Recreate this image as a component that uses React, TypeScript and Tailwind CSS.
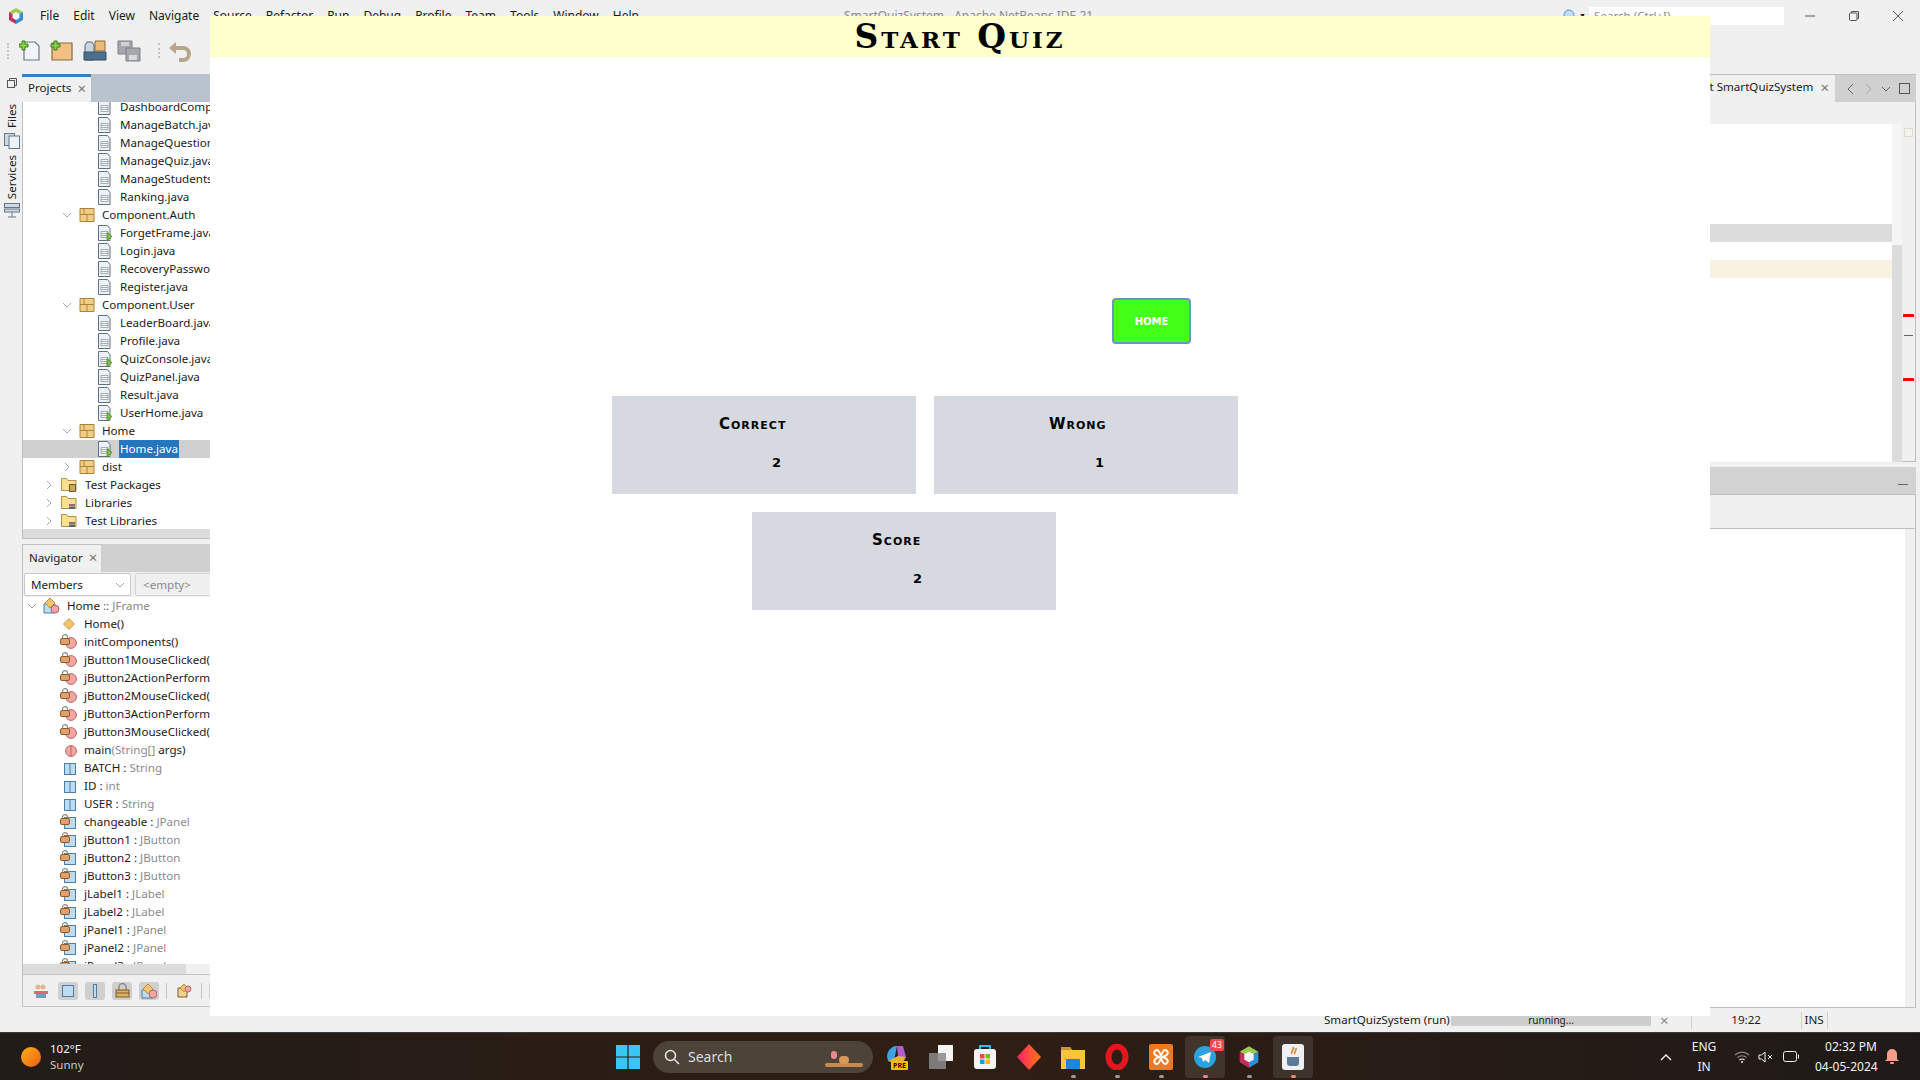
import type { ReactNode } from "react"

// ── Data ───────────────────────────────────────────────────────────────────────

type ProjectRow = { label: string; kind: "file" | "run" | "pkg" | "pkgClosed" | "folder" | "lib"; selected?: boolean }

const PROJECT_ROWS: ProjectRow[] = [
  { label: "DashboardComponent.java", kind: "file" },
  { label: "ManageBatch.java", kind: "file" },
  { label: "ManageQuestion.java", kind: "file" },
  { label: "ManageQuiz.java", kind: "file" },
  { label: "ManageStudents.java", kind: "file" },
  { label: "Ranking.java", kind: "file" },
  { label: "Component.Auth", kind: "pkg" },
  { label: "ForgetFrame.java", kind: "run" },
  { label: "Login.java", kind: "file" },
  { label: "RecoveryPassword.java", kind: "file" },
  { label: "Register.java", kind: "file" },
  { label: "Component.User", kind: "pkg" },
  { label: "LeaderBoard.java", kind: "file" },
  { label: "Profile.java", kind: "file" },
  { label: "QuizConsole.java", kind: "run" },
  { label: "QuizPanel.java", kind: "file" },
  { label: "Result.java", kind: "file" },
  { label: "UserHome.java", kind: "run" },
  { label: "Home", kind: "pkg" },
  { label: "Home.java", kind: "run", selected: true },
  { label: "dist", kind: "pkgClosed" },
  { label: "Test Packages", kind: "folder" },
  { label: "Libraries", kind: "lib" },
  { label: "Test Libraries", kind: "lib" },
]

type MemberRow = { name: string; type?: string; icon: "ctor" | "method" | "static" | "sfield" | "field" }

const MEMBER_ROWS: MemberRow[] = [
  { name: "Home()", icon: "ctor" },
  { name: "initComponents()", icon: "method" },
  { name: "jButton1MouseClicked(MouseEvent evt)", icon: "method" },
  { name: "jButton2ActionPerformed(ActionEvent evt)", icon: "method" },
  { name: "jButton2MouseClicked(MouseEvent evt)", icon: "method" },
  { name: "jButton3ActionPerformed(ActionEvent evt)", icon: "method" },
  { name: "jButton3MouseClicked(MouseEvent evt)", icon: "method" },
  { name: "main", type: "args", icon: "static" },
  { name: "BATCH", type: "String", icon: "sfield" },
  { name: "ID", type: "int", icon: "sfield" },
  { name: "USER", type: "String", icon: "sfield" },
  { name: "changeable", type: "JPanel", icon: "field" },
  { name: "jButton1", type: "JButton", icon: "field" },
  { name: "jButton2", type: "JButton", icon: "field" },
  { name: "jButton3", type: "JButton", icon: "field" },
  { name: "jLabel1", type: "JLabel", icon: "field" },
  { name: "jLabel2", type: "JLabel", icon: "field" },
  { name: "jPanel1", type: "JPanel", icon: "field" },
  { name: "jPanel2", type: "JPanel", icon: "field" },
  { name: "jPanel3", type: "JPanel", icon: "field" },
]

const MENU = ["File", "Edit", "View", "Navigate", "Source", "Refactor", "Run", "Debug", "Profile", "Team", "Tools", "Window", "Help"]

// ── Small icons ────────────────────────────────────────────────────────────────

function Chevron({ open }: { open: boolean }) {
  return (
    <svg className="shrink-0" width="10" height="10" viewBox="0 0 10 10" fill="none" stroke="#a8a8a8" strokeWidth="1">
      <path d={open ? "M1 3l4 4 4-4" : "M3 1l4 4-4 4"} />
    </svg>
  )
}

function JavaFile({ run }: { run: boolean }) {
  return (
    <svg className="shrink-0" width="16" height="16" viewBox="0 0 16 16">
      <path d="M1.500 .5h9l2.500 3v12h-11.500z" fill="#eef2f6" stroke="#5d7184" />
      <path d="M4 6.500h7v6h-7z" fill="#fff" stroke="#8a98a6" strokeWidth=".8" />
      <path d="M4 8.500h7M4 10.500h7" stroke="#8a98a6" strokeWidth=".8" />
      {run && <path d="M10 7.500l5 4-5 4z" fill="#7cc242" stroke="#4c8a22" strokeWidth=".8" />}
    </svg>
  )
}

function PackageIcon() {
  return (
    <svg className="shrink-0" width="16" height="16" viewBox="0 0 16 16">
      <path d="M1 1.500h14v13h-14z" fill="#f1ce86" stroke="#a8843f" />
      <path d="M1 7.500h14M8 7.500v7M5 1.500v6" stroke="#a8843f" />
    </svg>
  )
}

function FolderIcon({ lib }: { lib: boolean }) {
  return (
    <svg className="shrink-0" width="16" height="16" viewBox="0 0 16 16">
      <path d="M.5 1.500h5l1.500 2h8v10h-14.500z" fill="#fbe08f" stroke="#a8924f" />
      {lib ? (
        <g>
          <path d="M8 9h6v2h-6z" fill="#8d6a8a" />
          <path d="M8 11.500h6v2.500h-6z" fill="#5c6470" />
        </g>
      ) : (
        <path d="M8.500 7.500h6v7h-6z" fill="#c9a85a" stroke="#6c5a2c" />
      )}
    </svg>
  )
}

function Lock() {
  return (
    <svg className="absolute -left-[1px] top-0 z-10" width="10" height="12" viewBox="0 0 10 12">
      <path d="M2.500 5V3.200a2.500 2.500 0 015 0V5" fill="none" stroke="#8c8c8c" strokeWidth="1.200" />
      <rect x=".5" y="4.500" width="9" height="6" rx="1.500" fill="#e0a26a" stroke="#8c5a2c" />
    </svg>
  )
}

function MemberIcon({ icon }: { icon: MemberRow["icon"] }) {
  if (icon === "ctor") {
    return (
      <span className="flex h-4 w-4 shrink-0 items-center justify-center">
        <svg width="12" height="12" viewBox="0 0 12 12"><path d="M6 .5l5.500 5.500-5.500 5.500-5.500-5.500z" fill="#f2c46e" stroke="#c49a46" /></svg>
      </span>
    )
  }
  if (icon === "method" || icon === "static") {
    return (
      <span className="relative block h-4 w-4 shrink-0">
        {icon === "method" && <Lock />}
        <svg className="absolute left-[4px] top-[3px]" width="12" height="12" viewBox="0 0 12 12">
          <circle cx="6" cy="6" r="5.400" fill="#f4a5a5" stroke="#b86464" />
          {icon === "static" && <path d="M6 .6v10.800" stroke="#b86464" />}
        </svg>
      </span>
    )
  }
  return (
    <span className="relative block h-4 w-4 shrink-0">
      {icon === "field" && <Lock />}
      <svg className="absolute left-[3px] top-[3px]" width="12" height="12" viewBox="0 0 12 12">
        <rect x=".5" y=".5" width="11" height="11" fill="#bcdcf4" stroke="#4d7fa6" />
        {icon === "sfield" && <path d="M6 .5v11" stroke="#4d7fa6" />}
      </svg>
    </span>
  )
}

function Grip() {
  return <span className="h-[16px] w-[3px] border-l-2 border-dotted border-[#c4c4c4]" />
}

function ToolbarIcons() {
  return (
    <div className="flex h-[42px] shrink-0 items-center pb-[4px] pl-[7px]">
      <Grip />
      <svg className="ml-[9px]" width="22" height="22" viewBox="0 0 22 22">
        <path d="M5 2h11l4 4v14h-15z" fill="#f0f4f8" stroke="#64788c" strokeWidth="1.200" />
        <path d="M3 1h3v3h3v3h-3v3h-3v-3h-3v-3h3z" fill="#86d046" stroke="#3f7d1f" />
      </svg>
      <svg className="ml-[8px]" width="24" height="22" viewBox="0 0 24 22">
        <path d="M3 3h20v17h-20z" fill="#f3c084" stroke="#8a6a3c" strokeWidth="1.200" />
        <path d="M5 1h3v3h3v3h-3v3h-3v-3h-3v-3h3z" fill="#86d046" stroke="#3f7d1f" />
      </svg>
      <svg className="ml-[10px]" width="24" height="22" viewBox="0 0 24 22">
        <path d="M12 1h10v10h-10z" fill="#f0b878" stroke="#8a6a3c" />
        <path d="M2 5l2-3h5l2 3v15h-9z" fill="#c8d6e2" stroke="#50667c" />
        <path d="M1 12h22v8h-22z" fill="#4f6f8f" stroke="#344c64" />
      </svg>
      <svg className="ml-[10px]" width="24" height="22" viewBox="0 0 24 22">
        <path d="M1 1h14v13h-14z" fill="#a4a8ac" stroke="#7c8084" />
        <path d="M4 2h8v4h-8z" fill="#d0d2d4" />
        <path d="M9 8h14v13h-14z" fill="#a4a8ac" stroke="#7c8084" />
        <path d="M12 15h8v5h-8z" fill="#d8dadc" />
      </svg>
      <span className="ml-[17px]"><Grip /></span>
      <svg className="ml-[8px]" width="24" height="22" viewBox="0 0 24 22" fill="none">
        <path d="M6 8h9a6 6 0 010 12h-4" stroke="#b7a58c" strokeWidth="4" />
        <path d="M1 8l7-6v12z" fill="#b7a58c" />
      </svg>
    </div>
  )
}

function NetBeansLogo({ size = 18 }: { size?: number }) {
  return (
    <svg className="shrink-0" width={size} height={size} viewBox="0 0 18 18">
      <path d="M9 1l7 4-7 4-7-4z" fill="#9ccb52" />
      <path d="M2 5l7 4v8l-7-4z" fill="#c2305a" />
      <path d="M16 5l-7 4v8l7-4z" fill="#2f8ed6" />
      <path d="M9 5l3.500 2v4l-3.500 2-3.500-2v-4z" fill="#f4f4f4" />
    </svg>
  )
}

// ── Panels ─────────────────────────────────────────────────────────────────────

function ProjectTree() {
  return (
    <div className="-mt-[4px]">
      {PROJECT_ROWS.map(row => {
        const isFile = row.kind === "file" || row.kind === "run"
        const isPkg = row.kind === "pkg" || row.kind === "pkgClosed"
        return (
          <div key={row.label} className={`flex h-[18px] items-center whitespace-nowrap ${row.selected ? "bg-[#d0d0d0]" : ""}`}>
            {isFile && (
              <span className="ml-[74px] flex items-center gap-[7px]">
                <JavaFile run={row.kind === "run"} />
                <span className={row.selected ? "-ml-[1px] flex h-[18px] items-center bg-[#2675bf] px-[1px] text-white" : ""}>{row.label}</span>
              </span>
            )}
            {isPkg && (
              <span className="ml-[39px] flex items-center">
                <Chevron open={row.kind === "pkg"} />
                <span className="ml-[7px]"><PackageIcon /></span>
                <span className="ml-[7px]">{row.label}</span>
              </span>
            )}
            {(row.kind === "folder" || row.kind === "lib") && (
              <span className="ml-[21px] flex items-center">
                <Chevron open={false} />
                <span className="ml-[7px]"><FolderIcon lib={row.kind === "lib"} /></span>
                <span className="ml-[8px]">{row.label}</span>
              </span>
            )}
          </div>
        )
      })}
    </div>
  )
}

function MemberTree() {
  return (
    <div>
      <div className="flex h-[18px] items-center whitespace-nowrap">
        <span className="ml-[3px]"><Chevron open /></span>
        <svg className="ml-[6px]" width="17" height="16" viewBox="0 0 17 16">
          <path d="M1 6h11v9h-11z" fill="#bcdcf4" stroke="#4d7fa6" />
          <path d="M7 0l5 5-5 5-5-5z" fill="#f2c46e" stroke="#b88c3c" />
          <circle cx="12" cy="11" r="4" fill="#f4a5a5" stroke="#b86464" />
        </svg>
        <span className="ml-[7px]">Home</span>
        <span className="ml-[3px] text-[#555]">::</span>
        <span className="ml-[3px] text-[#8a8a8a]">JFrame</span>
      </div>
      {MEMBER_ROWS.map(row => (
        <div key={row.name} className="flex h-[18px] items-center whitespace-nowrap pl-[37px]">
          <MemberIcon icon={row.icon} />
          <span className="ml-[7px]">
            {row.icon === "static" ? (
              <>
                main<span className="text-[#8a8a8a]">(String[]</span> args)
              </>
            ) : row.type ? (
              <>
                {row.name} : <span className="text-[#8a8a8a]">{row.type}</span>
              </>
            ) : (
              row.name
            )}
          </span>
        </div>
      ))}
    </div>
  )
}

function IconButton({ on, children }: { on?: boolean; children: ReactNode }) {
  return (
    <span className={`flex h-[18px] w-[20px] shrink-0 items-center justify-center rounded-[3px] ${on ? "bg-[#cfcfcf]" : ""}`}>
      {children}
    </span>
  )
}

function NavigatorToolbar() {
  return (
    <div className="flex h-[33px] items-center gap-[7px] overflow-hidden border-y border-[#c4c4c4] pl-[8px]">
      <IconButton>
        <svg width="16" height="16" viewBox="0 0 16 16">
          <circle cx="5" cy="4" r="2.500" fill="#e4b48c" />
          <circle cx="10" cy="4" r="2.500" fill="#e4b48c" />
          <path d="M1 8h14v3h-14z" fill="#d86c6c" />
          <path d="M3 11h10v4h-10z" fill="#6ca0c8" />
        </svg>
      </IconButton>
      <IconButton on>
        <svg width="12" height="12" viewBox="0 0 12 12"><rect x=".5" y=".5" width="11" height="11" fill="#bcdcf4" stroke="#4d7fa6" /></svg>
      </IconButton>
      <IconButton on>
        <svg width="4" height="14" viewBox="0 0 4 14"><rect x=".5" y=".5" width="3" height="13" fill="#bcdcf4" stroke="#4d7fa6" /></svg>
      </IconButton>
      <IconButton on>
        <svg width="15" height="15" viewBox="0 0 15 15">
          <path d="M4 7V4a3.500 3.500 0 017 0v3" fill="none" stroke="#8c8c8c" strokeWidth="1.500" />
          <rect x="1" y="7" width="13" height="7" fill="#e0b060" stroke="#7a5a28" />
          <path d="M1 10h13" stroke="#7a5a28" />
        </svg>
      </IconButton>
      <IconButton on>
        <svg width="16" height="16" viewBox="0 0 16 16">
          <path d="M1 7h11v8h-11z" fill="#bcdcf4" stroke="#4d7fa6" />
          <path d="M7 1l5 5-5 5-5-5z" fill="#f2c46e" stroke="#b88c3c" />
          <circle cx="12" cy="11" r="4" fill="#f4a5a5" stroke="#b86464" />
        </svg>
      </IconButton>
      <span className="h-[16px] w-px bg-[#c4c4c4]" />
      <IconButton>
        <svg width="15" height="15" viewBox="0 0 15 15">
          <path d="M1 5h9v9h-9z" fill="#f2d48e" stroke="#7a5a28" />
          <path d="M7 1l4 4-4 4-4-4z" fill="#f2c46e" stroke="#b88c3c" />
          <circle cx="11" cy="6" r="3" fill="#f4a5a5" stroke="#b86464" />
        </svg>
      </IconButton>
      <span className="h-[16px] w-px bg-[#c4c4c4]" />
      <IconButton on>
        <svg width="12" height="14" viewBox="0 0 12 14" fill="none" stroke="#4d7fa6" strokeWidth="1.500"><path d="M6 1v11M2 8l4 4 4-4" /></svg>
      </IconButton>
    </div>
  )
}

function LeftColumn() {
  return (
    <div className="flex w-[300px] shrink-0 flex-col">
      {/* Projects */}
      <div className="flex h-[28px] bg-[#b9c3cd]">
        <div className="flex w-[69px] items-center gap-[6px] border-t-[3px] border-[#3a7ebf] bg-[#f0f0f0] pb-[3px] pl-[6px]">
          <span>Projects</span>
          <span className="text-[15px] leading-none text-[#777]">×</span>
        </div>
      </div>
      <div className="h-[427px] overflow-hidden border-l border-[#c0c0c0] bg-white">
        <ProjectTree />
      </div>
      <div className="h-[10px] border-b border-l border-[#c0c0c0] bg-[#dcdcdc]" />
      {/* Navigator */}
      <div className="mt-[5px] flex h-[28px] bg-[#d0d0d0]">
        <div className="flex w-[79px] items-center gap-[6px] border-l border-t border-[#c0c0c0] bg-[#f0f0f0] pb-[2px] pl-[6px]">
          <span>Navigator</span>
          <span className="text-[15px] leading-none text-[#777]">×</span>
        </div>
      </div>
      <div className="flex h-[25px] items-center gap-[4px] border-l border-[#c0c0c0] bg-[#f0f0f0] pl-[1px]">
        <div className="flex h-[23px] w-[107px] items-center justify-between rounded-[2px] border border-[#c8c8c8] bg-white pl-[6px] pr-[5px]">
          <span>Members</span>
          <Chevron open />
        </div>
        <div className="flex h-[23px] w-[100px] items-center justify-between rounded-[2px] border border-[#d4d4d4] pl-[7px] pr-[5px] text-[#8a8a8a]">
          <span>&lt;empty&gt;</span>
          <Chevron open />
        </div>
      </div>
      <div className="h-[367px] overflow-hidden border-l border-[#c0c0c0] bg-white pl-[1px]">
        <MemberTree />
      </div>
      <div className="flex h-[10px] border-l border-[#c0c0c0] bg-[#f0f0f0]">
        <div className="w-[163px] bg-[#dcdcdc]" />
      </div>
      <div className="border-l border-[#c0c0c0] bg-[#f0f0f0]">
        <NavigatorToolbar />
      </div>
    </div>
  )
}

function RightColumn() {
  return (
    <div className="flex min-w-0 flex-1 flex-col border-r-4 border-[#f0f0f0]">
      <div className="flex h-[28px] shrink-0 justify-end border-t border-[#bebebe] bg-[#d0d0d0]">
        <div className="flex w-[235px] items-center justify-end gap-[7px] bg-[#f0f0f0] pb-[3px] pr-[6px]">
          <span>Output - Project SmartQuizSystem</span>
          <span className="text-[15px] leading-none text-[#777]">×</span>
        </div>
        <div className="flex w-[81px] items-center gap-[7px] pl-[11px]">
          <svg width="10" height="12" viewBox="0 0 10 12" fill="none" stroke="#666"><path d="M7 1l-5 5 5 5" /></svg>
          <svg width="10" height="12" viewBox="0 0 10 12" fill="none" stroke="#aaa"><path d="M3 1l5 5-5 5" /></svg>
          <svg width="12" height="12" viewBox="0 0 12 12" fill="none" stroke="#666"><path d="M2 4l4 4 4-4" /></svg>
          <svg width="11" height="11" viewBox="0 0 11 11" fill="none" stroke="#555"><rect x=".5" y=".5" width="10" height="10" /></svg>
        </div>
      </div>
      <div className="flex h-[360px] shrink-0 flex-col border-b border-r border-[#bebebe] bg-[#f0f0f0]">
        <div className="h-[22px] shrink-0" />
        <div className="flex flex-1">
          <div className="flex flex-1 flex-col bg-white pt-[100px]">
            <div className="h-[18px] bg-[#dcdcdc]" />
            <div className="mt-[18px] h-[18px] bg-[#f8f2e0]" />
          </div>
          <div className="w-[10px] bg-[#f5f5f5] pt-[121px]">
            <div className="h-[217px] bg-[#dcdcdc]" />
          </div>
          <div className="flex w-[13px] flex-col items-center pt-[4px]">
            <div className="h-[9px] w-[9px] border border-[#dcdcd0] bg-[#f4f4ec]" />
            <div className="mt-[177px] h-[3px] w-[11px] bg-[#ff0000]" />
            <div className="mt-[18px] h-px w-[9px] bg-[#666]" />
            <div className="mt-[42px] h-[3px] w-[11px] bg-[#ff0000]" />
          </div>
        </div>
      </div>
      <div className="mt-[5px] flex h-[28px] shrink-0 items-end justify-end border-b border-[#bebebe] bg-[#d2d2d2] pb-[9px] pr-[8px]">
        <span className="h-px w-[10px] bg-[#666]" />
      </div>
      <div className="h-[34px] shrink-0 border-b border-r border-[#bebebe] bg-[#f0f0f0]" />
      <div className="flex flex-1 justify-end border-b border-r border-[#bebebe] bg-white">
        <div className="w-[10px] bg-[#f0f0f0]" />
      </div>
    </div>
  )
}

function StatusBar() {
  return (
    <div className="flex h-[24px] shrink-0 items-center bg-[#f0f0f0] pl-[1324px]">
      <span className="w-[127px] whitespace-nowrap">SmartQuizSystem (run)</span>
      <span className="flex h-[12px] w-[200px] items-center justify-center bg-[#cdcdcd] text-[10px]">running...</span>
      <span className="ml-[9px] text-[15px] leading-none text-[#888]">×</span>
      <span className="ml-[22px] h-[17px] w-px bg-[#d0d0d0]" />
      <span className="w-[109px] text-center">19:22</span>
      <span className="flex h-[17px] items-center border-x border-[#d0d0d0] px-[3px]">INS</span>
    </div>
  )
}

// ── Taskbar ────────────────────────────────────────────────────────────────────

function TaskIcon({ children, dot, active }: { children: ReactNode; dot?: string; active?: boolean }) {
  return (
    <div className={`relative flex h-[42px] w-[40px] items-center justify-center rounded-[4px] ${active ? "bg-white/10" : ""}`}>
      {children}
      {dot && <span className={`absolute bottom-0 h-[3px] w-[5px] rounded-full ${dot}`} />}
    </div>
  )
}

function Taskbar() {
  return (
    <div className="flex h-[48px] shrink-0 items-center border-t border-[#3a3a3a] bg-gradient-to-r from-[#221c18] via-[#2f1e14] to-[#1f1a18] font-['Noto_Sans',sans-serif] text-[#f2f2f2]">
      <div className="flex w-[616px] shrink-0 items-center pl-[21px]">
        <span className="h-[20px] w-[20px] rounded-full bg-gradient-to-br from-[#fbb01c] to-[#ee5a10]" />
        <div className="ml-[9px] text-[11.500px] leading-[16px]">
          <div>102°F</div>
          <div className="text-[#c8c8c8]">Sunny</div>
        </div>
      </div>
      <svg width="24" height="24" viewBox="0 0 24 24">
        <path d="M0 0h11.400v11.400H0zM12.600 0H24v11.400H12.600zM0 12.600h11.400V24H0zM12.600 12.600H24V24H12.600z" fill="#38c6f4" />
      </svg>
      <div className="relative ml-[13px] flex h-[32px] w-[220px] items-center overflow-hidden rounded-full bg-[#4d4338] pl-[11px] text-[14px] text-[#ddd]">
        <svg width="16" height="16" viewBox="0 0 16 16" fill="none" stroke="#e8e8e8" strokeWidth="1.500"><circle cx="6.500" cy="6.500" r="5" /><path d="M10.500 10.500l4.500 4.500" /></svg>
        <span className="ml-[8px]">Search</span>
        <span className="absolute left-[172px] top-[22px] h-[4px] w-[38px] rounded-full bg-[#c88a50]" />
        <span className="absolute left-[186px] top-[15px] h-[8px] w-[10px] rounded-full bg-[#d8985a]" />
        <span className="absolute left-[178px] top-[10px] h-[8px] w-[6px] rounded-full bg-[#e88a90]" />
      </div>
      <div className="ml-[4px] flex w-[440px] items-center gap-[4px]">
        <TaskIcon>
          <svg width="24" height="26" viewBox="0 0 24 26">
            <path d="M2 12C3 3 10 2 12 2l-3 15H3z" fill="#3ea3e0" />
            <path d="M12 2h6l3 11h-8z" fill="#b25ad0" />
            <path d="M3 17l10-5 8 1-3 5H6z" fill="#e8b040" />
            <rect x="6" y="17" width="17" height="9" rx="1" fill="#fac000" />
            <text x="14.500" y="24" fontSize="7" fontWeight="700" textAnchor="middle" fill="#111">PRE</text>
          </svg>
        </TaskIcon>
        <TaskIcon>
          <svg width="24" height="24" viewBox="0 0 24 24">
            <rect x="9" y="0" width="15" height="16" fill="#f4f4f4" />
            <rect x="0" y="8" width="17" height="16" fill="#8a8a8a" opacity=".85" />
          </svg>
        </TaskIcon>
        <TaskIcon>
          <svg width="24" height="26" viewBox="0 0 24 26">
            <path d="M7 5V2h10v3" fill="none" stroke="#38b8e8" strokeWidth="2" />
            <rect x="1" y="5" width="22" height="20" rx="3" fill="#f4f4f4" />
            <path d="M7 10h4.500v4.500H7z" fill="#e8502a" />
            <path d="M12.500 10H17v4.500h-4.500z" fill="#7cb820" />
            <path d="M7 15.500h4.500V20H7z" fill="#10a0e8" />
            <path d="M12.500 15.500H17V20h-4.500z" fill="#fab800" />
          </svg>
        </TaskIcon>
        <TaskIcon>
          <svg width="24" height="26" viewBox="0 0 24 26">
            <defs>
              <linearGradient id="anydesk" x1="0" y1="0" x2="1" y2="0">
                <stop offset="0" stopColor="#ff1f6a" />
                <stop offset="1" stopColor="#ff7a10" />
              </linearGradient>
            </defs>
            <path d="M12 0l12 13-12 13L0 13z" fill="url(#anydesk)" />
          </svg>
        </TaskIcon>
        <TaskIcon dot="bg-[#9a9a9a]">
          <svg width="24" height="24" viewBox="0 0 24 24">
            <path d="M0 2h9l2 3h13v19H0z" fill="#f8c53a" />
            <path d="M0 2h9l2 3H0z" fill="#c8942a" />
            <rect x="5" y="14" width="14" height="10" rx="1" fill="#1a88d8" />
          </svg>
        </TaskIcon>
        <TaskIcon dot="bg-[#9a9a9a]">
          <svg width="24" height="26" viewBox="0 0 24 26">
            <ellipse cx="12" cy="13" rx="8.500" ry="10.500" fill="none" stroke="#e8141e" strokeWidth="6" />
          </svg>
        </TaskIcon>
        <TaskIcon dot="bg-[#9a9a9a]">
          <svg width="24" height="26" viewBox="0 0 24 26">
            <rect width="24" height="26" rx="2" fill="#f07820" />
            <path d="M6 7c3-3 5 2 6 5 1-3 3-8 6-5s-3 6-5 6c2 0 8 3 5 6s-5-2-6-5c-1 3-3 8-6 5s3-6 5-6c-2 0-8-3-5-6z" fill="none" stroke="#fff" strokeWidth="2" />
          </svg>
        </TaskIcon>
        <TaskIcon dot="bg-[#f08a8a]" active>
          <svg width="22" height="22" viewBox="0 0 22 22">
            <circle cx="11" cy="11" r="11" fill="#2aa3e0" />
            <path d="M4 11l13-5-2 11-4-3-2 2-1-4z" fill="#fff" />
          </svg>
          <span className="absolute right-[1px] top-[3px] rounded-[2px] bg-[#ee4a4a] px-[2px] text-[9px] leading-[12px] text-white">43</span>
        </TaskIcon>
        <TaskIcon dot="bg-[#9a9a9a]">
          <NetBeansLogo size={24} />
        </TaskIcon>
        <TaskIcon dot="bg-[#f08a70]" active>
          <svg width="24" height="28" viewBox="0 0 24 28">
            <rect x="1" y="1" width="22" height="26" rx="3" fill="#eef0f2" />
            <path d="M12 4c2 3-3 4-1 7M15 5c1 3-3 4-1 6" fill="none" stroke="#e07820" strokeWidth="1.500" />
            <path d="M6 14h12v6a3 3 0 01-3 3H9a3 3 0 01-3-3z" fill="#5a7a98" />
          </svg>
        </TaskIcon>
      </div>
      <div className="ml-auto flex items-center pr-[21px]">
        <svg width="12" height="8" viewBox="0 0 12 8" fill="none" stroke="#f2f2f2" strokeWidth="1.400"><path d="M1 7l5-5 5 5" /></svg>
        <div className="ml-[12px] w-[40px] text-center text-[12px] leading-[20px]">
          <div>ENG</div>
          <div>IN</div>
        </div>
        <svg className="ml-[10px]" width="16" height="14" viewBox="0 0 16 14" fill="none" stroke="#888" strokeWidth="1.100">
          <path d="M1 5a10 10 0 0114 0M3.500 7.500a6.500 6.500 0 019 0" />
          <path d="M5.500 10a3.500 3.500 0 015 0" stroke="#f2f2f2" />
          <circle cx="8" cy="12" r="1" fill="#f2f2f2" stroke="none" />
        </svg>
        <svg className="ml-[8px]" width="16" height="14" viewBox="0 0 16 14" fill="none" stroke="#f2f2f2">
          <path d="M1 5h2.500L7 2v10L3.500 9H1zM10 5l4 4M14 5l-4 4" />
        </svg>
        <svg className="ml-[9px]" width="17" height="11" viewBox="0 0 17 11" fill="none" stroke="#f2f2f2">
          <rect x=".5" y=".5" width="13" height="10" rx="2" />
          <path d="M15.500 3.500v4" />
        </svg>
        <div className="ml-[15px] w-[62px] text-right text-[12px] leading-[20px]">
          <div>02:32 PM</div>
          <div className="whitespace-nowrap">04-05-2024</div>
        </div>
        <svg className="ml-[8px]" width="14" height="16" viewBox="0 0 14 16">
          <path d="M7 0a5 5 0 015 5v5l2 2H0l2-2V5a5 5 0 015-5z" fill="#f4a088" />
          <rect x="5" y="13" width="4" height="2" rx="1" fill="#f4a088" />
        </svg>
      </div>
    </div>
  )
}

// ── Quiz window ────────────────────────────────────────────────────────────────

function StatCard({ title, value, titleInset, valueInset }: { title: string; value: string; titleInset: string; valueInset: string }) {
  return (
    <div className="flex h-[98px] w-[304px] flex-col bg-[#d6d9e0] pt-[18px] font-['DejaVu_Sans',sans-serif] font-bold text-black">
      <div className={`text-[15px] leading-[20px] tracking-[1px] [font-variant:small-caps] ${titleInset}`}>{title}</div>
      <div className={`mt-[19px] text-[13px] leading-[20px] ${valueInset}`}>{value}</div>
    </div>
  )
}

function QuizWindow() {
  return (
    <div className="absolute left-[210px] top-[16px] flex h-[1000px] w-[1500px] flex-col bg-white">
      <div className="flex h-[41px] shrink-0 items-center justify-center bg-[#ffffcc] font-['DejaVu_Serif',serif] text-[33px] font-bold leading-none tracking-[3px] text-black [font-variant:small-caps]">
        Start Quiz
      </div>
      <button className="ml-[902px] mt-[241px] flex h-[46px] w-[79px] items-center justify-center rounded-[4px] border-2 border-[#6f93c8] bg-[#44ff18] font-['DejaVu_Sans',sans-serif] text-[10px] font-bold uppercase text-white">
        Home
      </button>
      <div className="ml-[402px] mt-[52px] flex gap-[18px]">
        <StatCard title="Correct" value="2" titleInset="pl-[107px]" valueInset="pl-[160px]" />
        <StatCard title="Wrong" value="1" titleInset="pl-[115px]" valueInset="pl-[161px]" />
      </div>
      <div className="ml-[542px] mt-[18px]">
        <StatCard title="Score" value="2" titleInset="pl-[120px]" valueInset="pl-[161px]" />
      </div>
    </div>
  )
}

// ── Page ───────────────────────────────────────────────────────────────────────

export default function App() {
  return (
    <div className="relative flex h-screen w-[1920px] flex-col overflow-hidden bg-[#f0f0f0] font-['Noto_Sans',sans-serif] text-[11.600px] text-[#1a1a1a]">
      {/* Title bar */}
      <div className="relative flex h-[32px] shrink-0 items-center pl-[7px]">
        <NetBeansLogo />
        <div className="ml-[15px] flex gap-[14px] text-[12px]">
          {MENU.map(m => (
            <span key={m} className="whitespace-nowrap">{m}</span>
          ))}
        </div>
        <span className="ml-[205px] whitespace-nowrap text-[12px] text-[#8a8a8a]">SmartQuizSystem - Apache NetBeans IDE 21</span>
        <div className="ml-auto flex items-center pr-[17px]">
          <svg width="16" height="14" viewBox="0 0 16 14">
            <circle cx="6" cy="6" r="5" fill="#c4dcf8" stroke="#4a90e2" />
          </svg>
          <span className="mr-[3px] text-[7px]">▼</span>
          <div className="flex h-[18px] w-[195px] items-center bg-white pl-[5px] text-[#8a8a8a]">Search (Ctrl+I)</div>
          <svg className="ml-[21px]" width="10" height="10" viewBox="0 0 10 10" stroke="#555"><path d="M0 5h10" /></svg>
          <svg className="ml-[34px]" width="10" height="10" viewBox="0 0 10 10" fill="none" stroke="#555">
            <rect x=".5" y="2" width="7.500" height="7.500" rx="1" />
            <path d="M2.500 2V.5h7v7H8" />
          </svg>
          <svg className="ml-[34px]" width="10" height="10" viewBox="0 0 10 10" stroke="#555"><path d="M0 0l10 10M10 0L0 10" /></svg>
        </div>
      </div>
      <ToolbarIcons />

      <div className="flex min-h-0 flex-1">
        {/* Side strip */}
        <div className="flex w-[22px] shrink-0 flex-col items-center pl-[1px] pt-[4px]">
          <svg width="10" height="10" viewBox="0 0 10 10" fill="none" stroke="#555">
            <rect x=".5" y="2.500" width="7" height="7" />
            <path d="M2.500 2.500v-2h7v7h-2" />
          </svg>
          <span className="mt-[16px] rotate-180 [writing-mode:vertical-rl]">Files</span>
          <svg className="mt-[5px]" width="16" height="16" viewBox="0 0 16 16">
            <rect x=".5" y=".5" width="10" height="12" fill="#cfd8e0" stroke="#64788c" />
            <rect x="5" y="3" width="10.500" height="12.500" fill="#eef2f6" stroke="#64788c" />
          </svg>
          <span className="mt-[6px] rotate-180 [writing-mode:vertical-rl]">Services</span>
          <svg className="mt-[4px]" width="16" height="15" viewBox="0 0 16 15" fill="none" stroke="#64788c">
            <rect x=".5" y=".5" width="15" height="4" fill="#cfd8e0" />
            <rect x=".5" y="6" width="15" height="3" fill="#cfd8e0" />
            <path d="M8 9v5M4 14h8" />
          </svg>
        </div>
        <LeftColumn />
        <RightColumn />
      </div>

      <StatusBar />
      <Taskbar />
      <QuizWindow />
    </div>
  )
}
